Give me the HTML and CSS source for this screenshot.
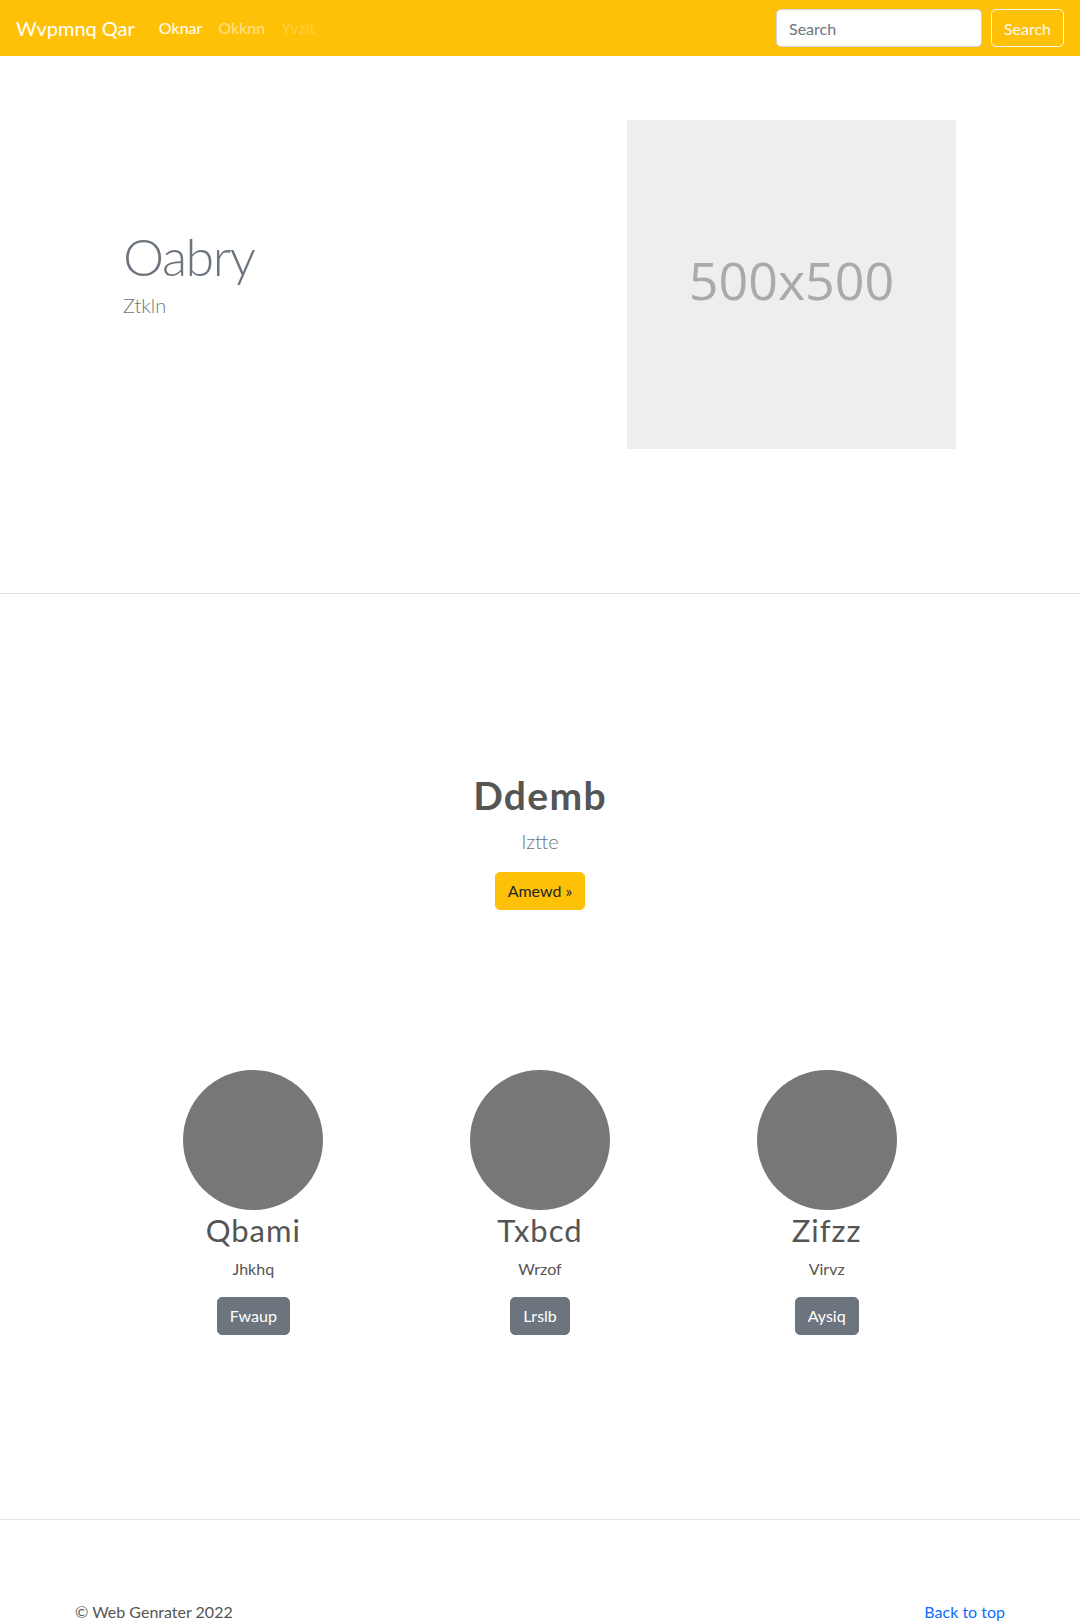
FILE: index.html
```html
<!DOCTYPE html>
<html lang="en">
<head>
<meta charset="utf-8">
<title>Wvpmnq Qar</title>
<link rel="stylesheet" href="styles.css">
</head>
<body>
<nav class="navbar">
  <a class="brand" href="#">Wvpmnq Qar</a>
  <ul class="nav-links">
    <li><a class="nav-link active" href="#">Oknar</a></li>
    <li><a class="nav-link" href="#">Okknn</a></li>
    <li><a class="nav-link disabled" href="#">Yvzit</a></li>
  </ul>
  <form class="search">
    <input class="search-input" type="search" placeholder="Search">
    <button class="search-btn" type="button">Search</button>
  </form>
</nav>

<section class="hero">
  <div class="hero-row">
    <div class="hero-text">
      <h1 class="display">Oabry</h1>
      <p class="lead">Ztkln</p>
    </div>
    <div class="hero-media">
      <div class="placeholder"><span>500x500</span></div>
    </div>
  </div>
</section>

<hr class="divider">

<section class="feature">
  <h1 class="feature-title">Ddemb</h1>
  <p class="lead feature-lead">Iztte</p>
  <a class="btn btn-warning" href="#">Amewd &raquo;</a>
</section>

<section class="cards">
  <div class="card">
    <div class="avatar"></div>
    <h2 class="card-title">Qbami</h2>
    <p class="card-text">Jhkhq</p>
    <a class="btn btn-secondary" href="#">Fwaup</a>
  </div>
  <div class="card">
    <div class="avatar"></div>
    <h2 class="card-title">Txbcd</h2>
    <p class="card-text">Wrzof</p>
    <a class="btn btn-secondary" href="#">Lrslb</a>
  </div>
  <div class="card">
    <div class="avatar"></div>
    <h2 class="card-title">Zifzz</h2>
    <p class="card-text">Virvz</p>
    <a class="btn btn-secondary" href="#">Aysiq</a>
  </div>
</section>

<hr class="divider">

<footer class="footer">
  <p class="copy">&copy; Web Genrater 2022</p>
  <a class="back" href="#">Back to top</a>
</footer>
</body>
</html>
```

FILE: styles.css
```css
* { box-sizing: border-box; }

body {
  margin: 0;
  font-family: Lato, "Open Sans", sans-serif;
  font-size: 16px;
  line-height: 1.5;
  color: #212529;
  background: #fff;
}

a { text-decoration: none; }

/* Navbar */
.navbar {
  height: 56px;
  background: #ffc107;
  display: flex;
  align-items: center;
  padding: 0 16px 0 16px;
}
.brand {
  color: #fff;
  font-size: 20px;
  line-height: 30px;
  margin-right: 16px;
}
.nav-links {
  list-style: none;
  display: flex;
  margin: 0;
  padding: 0;
  flex: 1;
}
.nav-link {
  display: block;
  padding: 8px 8px;
  color: rgba(255, 255, 255, 0.55);
  font-size: 16px;
}
.nav-link.active { color: #fff; }
.nav-link.disabled { color: rgba(255, 255, 255, 0.25); }

.search {
  display: flex;
  gap: 9px;
  margin: 0;
}
.search-input {
  width: 206px;
  height: 38px;
  border: 1px solid #ced4da;
  border-radius: 5px;
  padding: 6px 12px;
  font-family: inherit;
  font-size: 16px;
  color: #212529;
  background: #fff;
}
.search-input::placeholder { color: #6c757d; }
.search-btn {
  width: 73px;
  height: 38px;
  border: 1px solid #f8f9fa;
  border-radius: 5px;
  background: transparent;
  color: #f8f9fa;
  font-family: inherit;
  font-size: 16px;
  padding: 0;
}

/* Hero */
.hero {
  padding: 64px 0 144px;
}
.hero-row {
  width: 860px;
  margin: 0 auto;
  display: flex;
}
.hero-text {
  flex: 1;
  padding: 105px 12px 0 13px;
}
.hero-media {
  flex: 1;
  padding: 0 14px 0 12px;
  display: flex;
  justify-content: flex-end;
}
.display {
  margin: 0 0 3px;
  font-size: 52px;
  font-weight: 300;
  line-height: 1.2;
  letter-spacing: -1.5px;
  color: #6c757d;
}
.lead {
  margin: 0;
  font-size: 20px;
  font-weight: 300;
  line-height: 1.5;
  color: #6c757d;
}
.placeholder {
  width: 329px;
  height: 329px;
  background: #eeeeee;
  display: flex;
  align-items: center;
  justify-content: center;
}
.placeholder span {
  font-family: "Open Sans", Lato, sans-serif;
  font-size: 52px;
  color: #aaaaaa;
  line-height: 1;
  margin-bottom: 10px;
}

.divider {
  margin: 0;
  border: 0;
  border-top: 1px solid #e3e3e3;
}

/* Feature */
.feature {
  text-align: center;
  padding-top: 178px;
}
.feature-title {
  margin: 0 0 7px;
  font-size: 39px;
  font-weight: 700;
  line-height: 1.2;
  letter-spacing: 1.3px;
  color: #555555;
}
.feature-lead {
  margin-bottom: 16px;
}
.btn {
  display: inline-block;
  padding: 6px 12px;
  font-size: 16px;
  line-height: 24px;
  border: 1px solid transparent;
  border-radius: 5px;
}
.btn-warning {
  background: #ffc107;
  border-color: #ffc107;
  color: #212529;
}
.btn-secondary {
  background: #6c757d;
  border-color: #6c757d;
  color: #fff;
}

/* Cards */
.cards {
  width: 860px;
  margin: 0 auto;
  padding: 160px 0 184px;
  display: grid;
  grid-template-columns: repeat(3, 1fr);
}
.card {
  display: flex;
  flex-direction: column;
  align-items: center;
}
.avatar {
  width: 140px;
  height: 140px;
  border-radius: 50%;
  background: #777777;
}
.card-title {
  margin: 2px 0 8px;
  font-size: 31px;
  font-weight: 400;
  line-height: 1.2;
  letter-spacing: 1px;
  color: #555555;
}
.card-text {
  margin: 0 0 16px;
  font-size: 16px;
  color: #555555;
}

/* Footer */
.footer {
  width: 930px;
  margin: 0 auto;
  padding-top: 80px;
  display: flex;
  justify-content: space-between;
  align-items: baseline;
}
.copy {
  margin: 0;
  color: #555555;
}
.back { color: #0d6efd; }
```
